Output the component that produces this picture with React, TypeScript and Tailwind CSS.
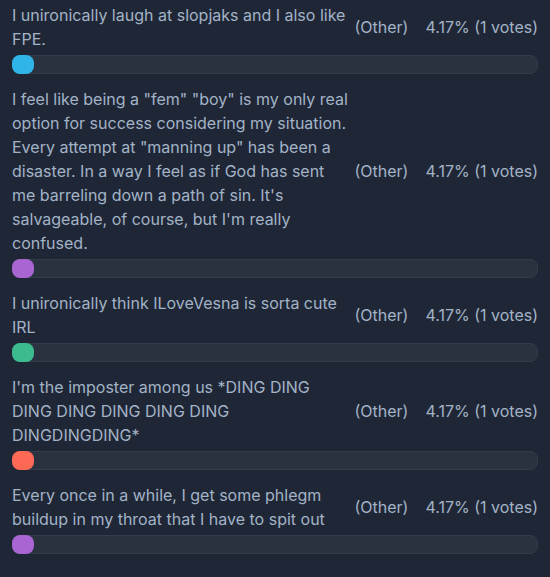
import React from "react";

type Option = {
  text: string;
  color: string;
};

const options: Option[] = [
  {
    text: "I unironically laugh at slopjaks and I also like FPE.",
    color: "bg-[#30b5e8]",
  },
  {
    text: 'I feel like being a "fem" "boy" is my only real option for success considering my situation. Every attempt at "manning up" has been a disaster. In a way I feel as if God has sent me barreling down a path of sin. It\'s salvageable, of course, but I\'m really confused.',
    color: "bg-[#a965d1]",
  },
  {
    text: "I unironically think ILoveVesna is sorta cute IRL",
    color: "bg-[#3cbb8f]",
  },
  {
    text: "I'm the imposter among us *DING DING DING DING DING DING DING DINGDINGDING*",
    color: "bg-[#fc6a56]",
  },
  {
    text: "Every once in a while, I get some phlegm buildup in my throat that I have to spit out",
    color: "bg-[#a965d1]",
  },
];

const App = () => {
  return (
    <div className="min-h-[577px] bg-[#1f2737] px-3 pt-[3px] font-['Inter',sans-serif] text-base leading-6 text-[#a3b3c6]">
      {options.map((opt, i) => (
        <div key={i} className="mb-[13px]">
          <div className="flex items-center">
            <div className="w-[340px] shrink-0">{opt.text}</div>
            <div className="ml-auto flex gap-[17px] -mt-px whitespace-nowrap">
              <span>(Other)</span>
              <span>4.17% (1 votes)</span>
            </div>
          </div>
          {/* bar */}
          <div className="mt-[4px] h-[19px] rounded-lg border border-[#333c4a] bg-[#2a323f]">
            <div className={`-m-px h-[19px] w-[22px] rounded-lg ${opt.color}`} />
          </div>
        </div>
      ))}
    </div>
  );
};

export default App;
